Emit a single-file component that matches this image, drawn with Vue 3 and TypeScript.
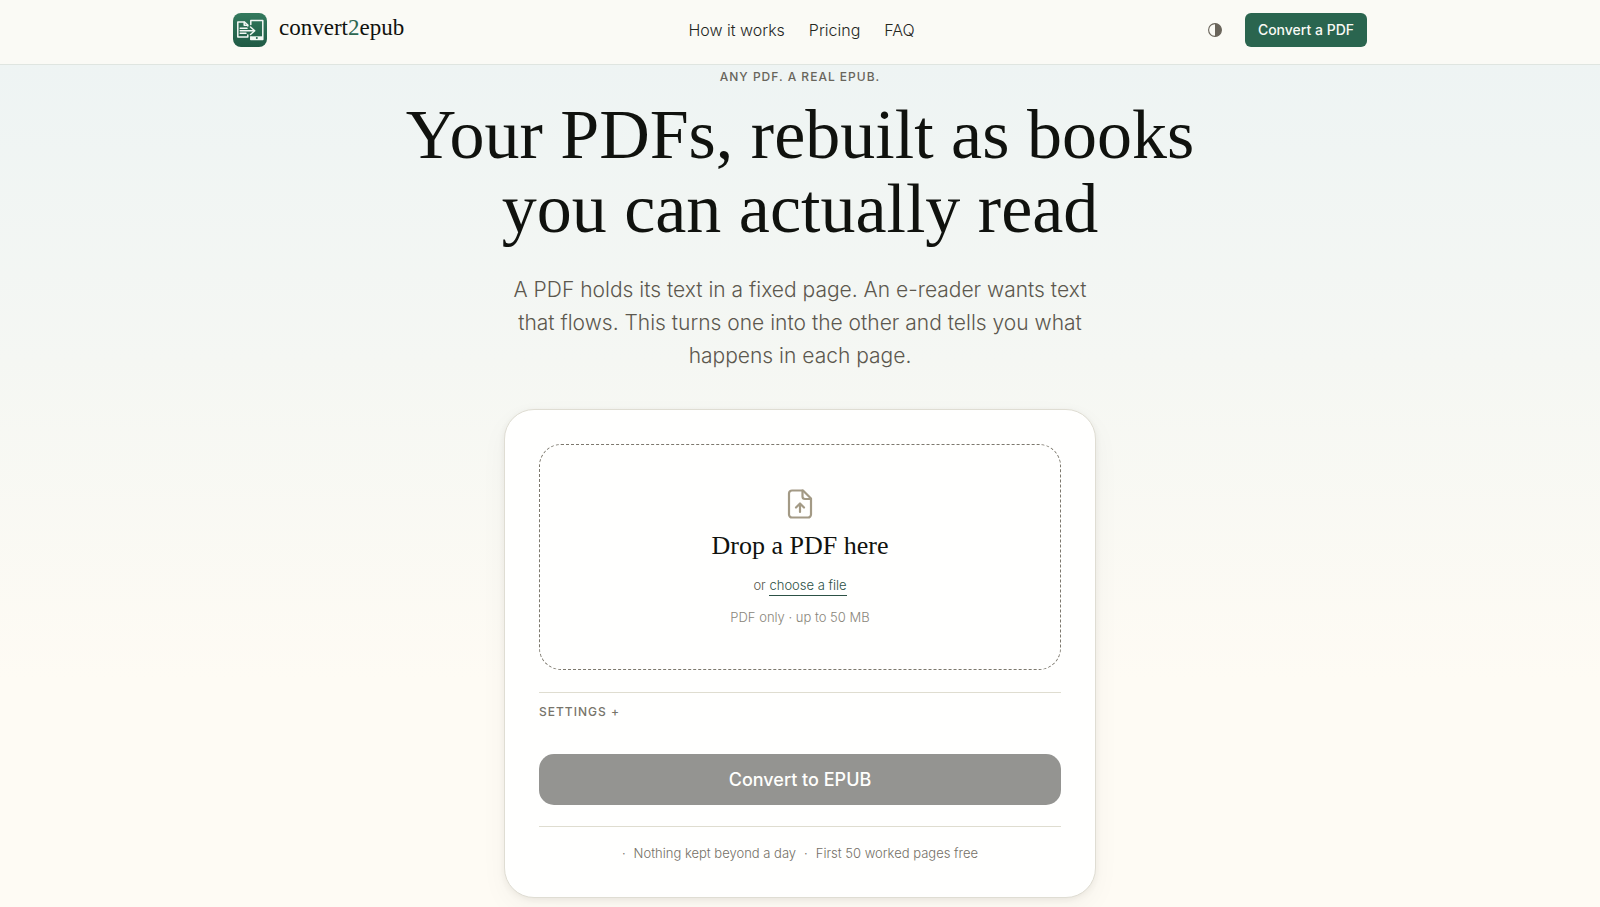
<script setup lang="ts">
import { ref } from 'vue'

interface NavItem {
  label: string
  href: string
}

const navItems: NavItem[] = [
  { label: 'How it works', href: '#how' },
  { label: 'Pricing', href: '#pricing' },
  { label: 'FAQ', href: '#faq' },
]
const notes: string[] = ['Nothing kept beyond a day', 'First 50 worked pages free']

const file = ref<File | null>(null)

function onPick(event: Event): void {
  file.value = (event.target as HTMLInputElement).files?.[0] ?? null
}

function onDrop(event: DragEvent): void {
  file.value = event.dataTransfer?.files?.[0] ?? null
}
</script>

<template>
  <div class="page">
    <header class="topbar">
      <div class="topbar-inner">
        <a class="brand" href="#">
          <svg class="brand-mark" viewBox="0 0 34 34" aria-hidden="true">
            <defs>
              <linearGradient id="mark" x1="0" y1="0" x2="0" y2="1">
                <stop offset="0" stop-color="#33795d" />
                <stop offset="1" stop-color="#1f5a45" />
              </linearGradient>
            </defs>
            <rect width="34" height="34" rx="8" fill="url(#mark)" />
            <g fill="none" stroke="#f4f8f5" stroke-width="1.5" stroke-linejoin="round" stroke-linecap="round">
              <path d="M14.800 13 V12 L11.500 9 H4.800 V24 H14.800 V22" />
              <path d="M11.200 9.200 V12.300 H14.500" />
              <path d="M7.200 15.300 H14 M7.200 17.800 H20.500 M7.200 20.300 H13" />
              <path d="M17.500 14 L21.700 17.800 L17.500 21.500" />
              <path d="M17.800 11.500 V7.500 H29.800 V26.500 H17.800 V24" />
            </g>
            <path d="M17.500 23.300 H30 V26.800 H17.500 Z" fill="#f4f8f5" />
            <circle cx="23.800" cy="25" r="1" fill="#25634b" />
          </svg>
          <span class="brand-name">convert<span class="brand-two">2</span>epub</span>
        </a>
        <nav class="nav" aria-label="Main">
          <a v-for="item in navItems" :key="item.label" :href="item.href">{{ item.label }}</a>
        </nav>
        <div class="actions">
          <button class="theme" type="button" aria-label="Toggle theme">
            <svg viewBox="0 0 14 14" aria-hidden="true">
              <circle cx="7" cy="7" r="6.400" fill="none" stroke="#69645a" stroke-width="1.100" />
              <path d="M7 .6 A6.400 6.400 0 0 1 7 13.400 Z" fill="#69645a" />
            </svg>
          </button>
          <a class="cta" href="#convert">Convert a PDF</a>
        </div>
      </div>
    </header>

    <main class="hero">
      <p class="eyebrow">Any PDF. A real EPUB.</p>
      <h1>Your PDFs, rebuilt as books<br />you can actually read</h1>
      <p class="lede">
        A PDF holds its text in a fixed page. An e-reader wants text<br />
        that flows. This turns one into the other and tells you what<br />
        happens in each page.
      </p>

      <form id="convert" class="card" @submit.prevent>
        <div class="drop" @dragover.prevent @drop.prevent="onDrop">
          <svg class="drop-icon" viewBox="0 0 32 32" aria-hidden="true">
            <g fill="none" stroke="#a39a85" stroke-width="2.200" stroke-linecap="round" stroke-linejoin="round">
              <path d="M19 2.500 H8 A3 3 0 0 0 5 5.500 V26.500 A3 3 0 0 0 8 29.500 H24 A3 3 0 0 0 27 26.500 V10.500 Z" />
              <path d="M18.500 2.500 V8.500 A2.500 2.500 0 0 0 21 11 H27" />
              <path d="M16 24 V16 M12 19.500 L16 15.500 L20 19.500" />
            </g>
          </svg>
          <h2>Drop a PDF here</h2>
          <p class="choose">
            or
            <label class="choose-link" for="pdf">choose a file</label>
            <input id="pdf" class="file" type="file" accept="application/pdf" @change="onPick" />
          </p>
          <p class="limit">PDF only · up to 50 MB</p>
        </div>
        <div class="settings">
          <button type="button">Settings +</button>
        </div>
        <button class="submit" type="submit" :disabled="!file">Convert to EPUB</button>
        <ul class="notes">
          <li v-for="note in notes" :key="note">{{ note }}</li>
        </ul>
      </form>
    </main>
  </div>
</template>

<style>
body {
  margin: 0;
  background: #fefbf4;
}
</style>

<style scoped>
.page {
  min-height: 100vh;
  box-sizing: border-box;
  overflow: hidden;
  background: linear-gradient(180deg, #edf3f2 0, #eef4f3 64px, #f5f7f3 360px, #fefbf4 680px);
  color: #10120e;
  font-family: Inter, "Liberation Sans", sans-serif;
}
a {
  color: inherit;
  text-decoration: none;
}
button {
  font-family: inherit;
  border: 0;
  padding: 0;
  cursor: pointer;
}
.topbar {
  background: #fafaf5;
  border-bottom: 1px solid #dfe5e0;
  padding: 0 24px;
}
.topbar-inner {
  max-width: 1134px;
  margin: 0 auto;
  padding: 13px 0 17px;
  display: flex;
  align-items: center;
  justify-content: space-between;
}
.brand {
  display: flex;
  align-items: center;
  gap: 12px;
}
.brand-mark {
  width: 34px;
  height: 34px;
}
.brand-name {
  font-family: "Liberation Serif", serif;
  font-size: 23px;
  line-height: 30px;
  padding-bottom: 4px;
}
.brand-two {
  color: #2c6650;
}
.nav {
  display: flex;
  gap: 24px;
  font-size: 16px;
  font-weight: 300;
  line-height: 24px;
  color: #25271f;
}
.actions {
  display: flex;
  align-items: center;
  gap: 14px;
}
.theme {
  display: grid;
  place-items: center;
  width: 32px;
  height: 32px;
  background: none;
}
.theme svg {
  width: 14px;
  height: 14px;
}
.cta {
  background: #2a654f;
  color: #f9faf5;
  border-radius: 6px;
  padding: 0 13px;
  font-size: 14px;
  font-weight: 500;
  line-height: 34px;
}
.hero {
  display: flex;
  flex-direction: column;
  align-items: center;
  padding: 3px 24px 10px;
  text-align: center;
}
p,
h1,
h2 {
  margin: 0;
}
.eyebrow {
  font-size: 12px;
  font-weight: 500;
  line-height: 18px;
  letter-spacing: 1px;
  text-transform: uppercase;
  color: #68655b;
}
h1 {
  margin-top: 12px;
  font-family: "Liberation Serif", serif;
  font-size: 70px;
  font-weight: 400;
  line-height: 74px;
}
.lede {
  margin-top: 27px;
  font-size: 21px;
  font-weight: 300;
  line-height: 33px;
  color: #5c584e;
}
.card {
  box-sizing: border-box;
  width: 100%;
  max-width: 592px;
  margin-top: 37px;
  padding: 34px 34px 33px;
  background: #fffffe;
  border: 1px solid #dfddd3;
  border-radius: 30px;
  box-shadow: 0 2px 6px rgba(60, 55, 40, 0.08), 0 10px 28px rgba(60, 55, 40, 0.04);
}
.drop {
  display: flex;
  flex-direction: column;
  align-items: center;
  padding: 43px 20px 40px;
  border: 1px dashed #7c786d;
  border-radius: 22px;
}
.drop-icon {
  width: 32px;
  height: 32px;
}
h2 {
  margin-top: 8px;
  font-family: "Liberation Serif", serif;
  font-size: 26px;
  font-weight: 400;
  line-height: 36px;
}
.choose {
  margin-top: 9px;
  font-size: 13px;
  font-weight: 300;
  line-height: 24px;
  color: #59574d;
}
.choose-link {
  display: inline-block;
  line-height: 20px;
  color: #2c5145;
  border-bottom: 1px solid #2c5145;
  cursor: pointer;
}
.file {
  position: absolute;
  width: 1px;
  height: 1px;
  opacity: 0;
}
.limit {
  margin-top: 8px;
  font-size: 13px;
  font-weight: 300;
  line-height: 24px;
  color: #89857a;
}
.settings {
  margin-top: 22px;
  padding-top: 10px;
  border-top: 1px solid #dfddd0;
  text-align: left;
}
.settings button {
  display: block;
  background: none;
  font-size: 12px;
  font-weight: 500;
  line-height: 18px;
  letter-spacing: 1px;
  text-transform: uppercase;
  color: #77746a;
}
.submit {
  display: block;
  width: 100%;
  margin-top: 33px;
  background: #10120e;
  color: #fffffd;
  border-radius: 15px;
  font-size: 18px;
  font-weight: 500;
  line-height: 51px;
}
.submit:disabled {
  background: #949491;
  cursor: default;
}
.notes {
  display: flex;
  justify-content: center;
  gap: 8px;
  margin: 21px 0 0;
  padding: 15px 0 0;
  border-top: 1px solid #dfddd0;
  list-style: none;
  font-size: 13px;
  font-weight: 300;
  line-height: 22px;
  color: #747066;
}
.notes li::before {
  content: "·";
  margin-right: 8px;
}
</style>
